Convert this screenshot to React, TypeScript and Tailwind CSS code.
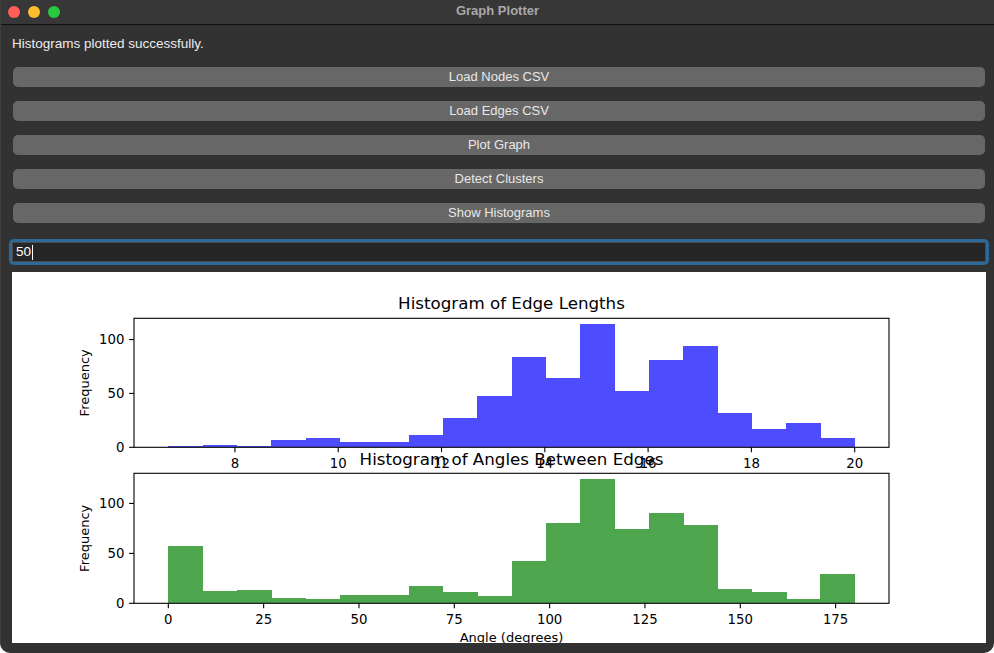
import React from 'react';

const edgeCounts = [1, 2, 1, 7, 9, 5, 5, 11, 27, 48, 84, 64, 114, 52, 81, 94, 32, 17, 23, 9];
const angleCounts = [57, 12, 13, 5, 4, 8, 8, 17, 11, 7, 42, 80, 124, 74, 90, 78, 14, 11, 4, 29];

const buttons = ['Load Nodes CSV', 'Load Edges CSV', 'Plot Graph', 'Detect Clusters', 'Show Histograms'];

// axes geometry inside the white canvas
const L = 122;
const W = 755;
const BAR = W / 22;
const TICK = 4.9;
const FONT = "'DejaVu Sans', sans-serif";

function Histogram({
  top,
  height,
  counts,
  ymax,
  color,
  xticks,
  toX,
}: {
  top: number;
  height: number;
  counts: number[];
  ymax: number;
  color: string;
  xticks: number[];
  toX: (v: number) => number;
}) {
  const bottom = top + height;
  const toY = (c: number) => bottom - (c * height) / ymax;
  return (
    <g>
      <g shapeRendering="crispEdges">
        {counts.map((c, i) => (
          <rect key={i} x={L + (i + 1) * BAR} y={toY(c)} width={BAR + 0.5} height={bottom - toY(c)} fill={color} />
        ))}
      </g>
      <rect x={L} y={top} width={W} height={height} fill="none" stroke="#000" strokeWidth={1.1} />
      {xticks.map((t) => (
        <g key={t}>
          <line x1={toX(t)} x2={toX(t)} y1={bottom} y2={bottom + TICK} stroke="#000" strokeWidth={1.1} />
          <text x={toX(t)} y={bottom + 20.3} fontSize={13.3} textAnchor="middle" fill="#000" fontFamily={FONT}>
            {t}
          </text>
        </g>
      ))}
      {[0, 50, 100].map((t) => (
        <g key={t}>
          <line x1={L - TICK} x2={L} y1={toY(t)} y2={toY(t)} stroke="#000" strokeWidth={1.1} />
          <text
            x={L - TICK - 4.6}
            y={toY(t)}
            fontSize={13.3}
            textAnchor="end"
            dominantBaseline="central"
            fill="#000"
            fontFamily={FONT}
          >
            {t}
          </text>
        </g>
      ))}
      <text
        x={73}
        y={top + height / 2}
        fontSize={13}
        textAnchor="middle"
        dominantBaseline="central"
        fill="#000"
        fontFamily={FONT}
        transform={`rotate(-90 73 ${top + height / 2})`}
      >
        Frequency
      </text>
    </g>
  );
}

export default function App() {
  const edgeX = (v: number) => L + (v - 6.0455) * (W / 14.619);
  const angleX = (v: number) => L + (v + 9) * (W / 198);

  return (
    <div
      className="w-[994px] h-[653px] bg-[#323232] flex flex-col overflow-hidden rounded-b-[10px] border-l border-[#3e3e3e]"
      style={{ fontFamily: "'Liberation Sans', Arial, sans-serif" }}
    >
      {/* Title bar */}
      <div className="h-[25px] shrink-0 bg-[#373737] border-b border-[#111] grid grid-cols-[1fr_auto_1fr] items-center">
        <div className="flex items-center gap-[8px] pl-[7px]">
          <span className="w-[12px] h-[12px] rounded-full bg-[#ff5f57]" />
          <span className="w-[12px] h-[12px] rounded-full bg-[#febc2e]" />
          <span className="w-[12px] h-[12px] rounded-full bg-[#28c840]" />
        </div>
        <div className="text-[13px] font-bold text-[#a9a9a9] leading-[24px] -mt-[3px]">Graph Plotter</div>
        <div />
      </div>

      {/* Status */}
      <div className="mt-[11px] h-[16px] leading-[16px] pl-[11px] text-[13.5px] text-[#ececec]">
        Histograms plotted successfully.
      </div>

      {/* Buttons */}
      <div className="mt-[15px] ml-[12px] w-[972px] flex flex-col gap-[14px]">
        {buttons.map((b) => (
          <div
            key={b}
            className="h-[20px] rounded-[5px] bg-[#676767] flex items-center justify-center text-[13px] text-[#e8e8e8]"
          >
            {b}
          </div>
        ))}
      </div>

      {/* Input */}
      <div className="mt-[16px] ml-[8px] w-[980px] h-[26px] rounded-[5px] bg-[#2a6a9b] p-[3px]">
        <div className="h-full bg-[#262626] border border-[#4c4c4c] flex items-center pl-[3px] text-[13.5px] text-white">
          50<span className="ml-[1px] w-px h-[15px] bg-white" />
        </div>
      </div>

      {/* Plot canvas */}
      <div className="mt-[7px] ml-[11px] w-[974px] h-[371px] bg-white">
        <svg width={974} height={371} viewBox="0 0 974 371">
          <Histogram
            top={46.3}
            height={129}
            counts={edgeCounts}
            ymax={119.7}
            color="#4d4dff"
            xticks={[8, 10, 12, 14, 16, 18, 20]}
            toX={edgeX}
          />
          <Histogram
            top={201.3}
            height={130}
            counts={angleCounts}
            ymax={130.2}
            color="#4da64d"
            xticks={[0, 25, 50, 75, 100, 125, 150, 175]}
            toX={angleX}
          />
          <text x={L + W / 2} y={37} fontSize={16.7} textAnchor="middle" fill="#000" fontFamily={FONT}>
            Histogram of Edge Lengths
          </text>
          <text x={L + W / 2} y={193} fontSize={16.7} textAnchor="middle" fill="#000" fontFamily={FONT}>
            Histogram of Angles Between Edges
          </text>
          <text x={L + W / 2} y={369.5} fontSize={13} textAnchor="middle" fill="#000" fontFamily={FONT}>
            Angle (degrees)
          </text>
        </svg>
      </div>
    </div>
  );
}
